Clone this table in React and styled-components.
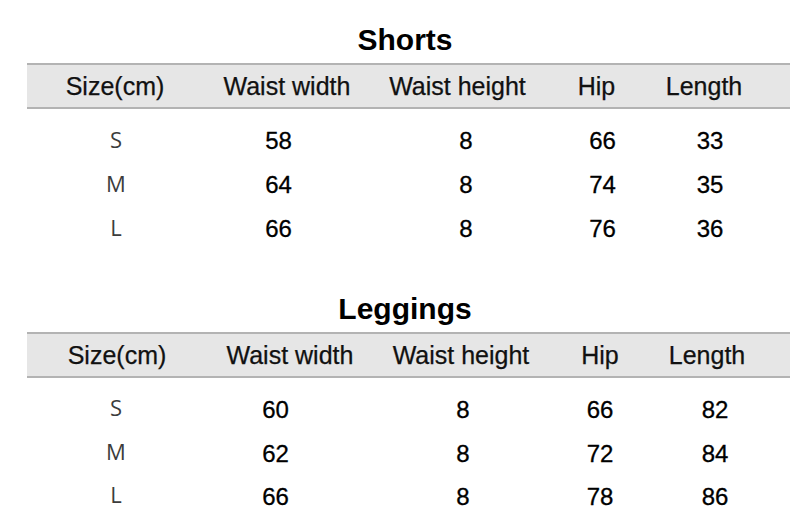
import React from 'react'
import styled, {createGlobalStyle} from 'styled-components'

const GlobalStyle = createGlobalStyle`
    body {
        margin: 0;
        background: #ffffff;
        font-family: "Liberation Sans", Arial, sans-serif;
    }
`

const Page = styled.div`
    width: 800px;
    height: 523px;
    padding: 22px 10px 0 27px;
    box-sizing: border-box;
    overflow: hidden;
`

const Section = styled.div`
    width: 763px;
    margin-bottom: ${props => props.$gap || 0}px;
`

const Title = styled.h2`
    margin: 0 0 5px 0;
    height: 36px;
    line-height: 36px;
    font-size: 30px;
    font-weight: bold;
    color: #000;
    text-align: center;
    padding-right: 7px;
`

const HeaderBar = styled.div`
    display: grid;
    grid-template-columns: ${props => props.$cols};
    background: #e6e6e6;
    border-top: 2px solid #b3b3b3;
    border-bottom: 2px solid #b3b3b3;
    padding-top: 1px;
    height: 41px;
    line-height: 40px;
    font-size: 25px;
    color: #111;
    margin-bottom: 10px;
    -webkit-text-stroke: 0.25px #111;
`

const Row = styled.div`
    display: grid;
    grid-template-columns: ${props => props.$cols};
    height: ${props => props.$h}px;
    line-height: ${props => props.$h}px;
    font-size: 24px;
    color: #000;
    -webkit-text-stroke: 0.3px #000;
`

const Cell = styled.div`
    display: flex;
    justify-content: center;
    white-space: nowrap;
`

const SizeCell = styled(Cell)`
    font-family: "Open Sans", "Noto Sans", sans-serif;
    font-size: 22px;
    color: #3c3c3c;
    -webkit-text-stroke: 0;
    margin-top: -2px;
`

const headers = ['Size(cm)', 'Waist width', 'Waist height', 'Hip', 'Length']

const tables = [
    {
        name: 'Shorts',
        headCols: '176px 168px 173px 105px 110px',
        rowCols: '178px 147px 228px 45px 170px',
        rowH: 44,
        gap: 40,
        rows: [
            ['S', '58', '8', '66', '33'],
            ['M', '64', '8', '74', '35'],
            ['L', '66', '8', '76', '36'],
        ],
    },
    {
        name: 'Leggings',
        headCols: '180px 166px 176px 102px 112px',
        rowCols: '178px 141px 234px 40px 190px',
        rowH: 43.5,
        gap: 0,
        rows: [
            ['S', '60', '8', '66', '82'],
            ['M', '62', '8', '72', '84'],
            ['L', '66', '8', '78', '86'],
        ],
    },
]

function App(){
    return(
        <Page>
            <GlobalStyle />
            {tables.map(table => {
                return(
                    <Section key={table.name} $gap={table.gap}>
                        <Title>{table.name}</Title>
                        <HeaderBar $cols={table.headCols}>
                            {headers.map(h => <Cell key={h}>{h}</Cell>)}
                        </HeaderBar>
                        {table.rows.map(row => (
                            <Row key={row[0]} $cols={table.rowCols} $h={table.rowH}>
                                <SizeCell>{row[0]}</SizeCell>
                                {row.slice(1).map((v, i) => <Cell key={i}>{v}</Cell>)}
                            </Row>
                        ))}
                    </Section>
                )
            })}
        </Page>
    )
}

export default App
